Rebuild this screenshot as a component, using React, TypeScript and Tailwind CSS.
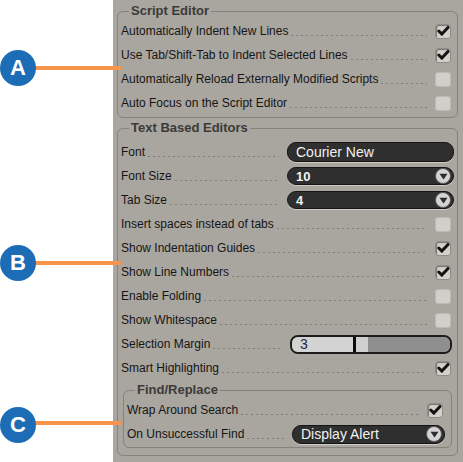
import React from "react";

const FONT = { fontFamily: '"Liberation Sans", Arial, sans-serif' };

function Check() {
  return (
    <svg width="13" height="12" viewBox="0 0 13 12">
      <path d="M1.8 6 L4.9 9.1 L11 2.4" fill="none" stroke="#131313" strokeWidth="3" strokeLinecap="round" strokeLinejoin="round" />
    </svg>
  );
}

function CheckBox({ checked, className = "" }: { checked?: boolean; className?: string }) {
  return (
    <div
      className={
        "w-[16px] h-[15px] rounded-[3px] flex items-center justify-center border " +
        (checked
          ? "bg-[#d3d0cc] border-[#8f8c87] shadow-[inset_1px_1px_1px_#77746f] "
          : "bg-[#d2cfcb] border-[#bdbab5] ") +
        className
      }
    >
      {checked && <Check />}
    </div>
  );
}

function Arrow() {
  return (
    <div className="w-[16px] h-[16px] rounded-full bg-[#d4d4d4] border border-[#5a5a5a] flex items-center justify-center shrink-0">
      <svg width="9" height="7" viewBox="0 0 9 7">
        <path d="M0.5 0.8 L8.5 0.8 L4.5 6.5 Z" fill="#2b2b2b" />
      </svg>
    </div>
  );
}

function Dropdown({ value, width, bold, arrow, className = "" }: { value: string; width: string; bold?: boolean; arrow?: boolean; className?: string }) {
  return (
    <div
      className={
        "flex items-center justify-between rounded-[9px] bg-[#2f2f2f] border border-[#151515] shadow-[0_1px_0_#cfccc7] pl-[8px] pr-[2px] text-[#f2f2f2] text-[14px] leading-none " +
        width +
        " " +
        className
      }
    >
      <span className={bold ? "font-bold text-[13px]" : ""}>{value}</span>
      {arrow && <Arrow />}
    </div>
  );
}

function Slider() {
  return (
    <div className="w-[162px] h-[19px] mr-[2px] rounded-[8px] border-2 border-[#1c1c1c] overflow-hidden flex">
      <div className="w-[61px] bg-[#d3d3d3] text-[14px] leading-[15px] pl-[8px] text-[#1d2a45]">3</div>
      <div className="w-[3px] bg-[#0a0a0a]" />
      <div className="w-[12px] bg-[#cfcfcf]" />
      <div className="flex-1 bg-[#8f8f8f]" />
    </div>
  );
}

function Row({ label, children }: { label: string; children: React.ReactNode }) {
  return (
    <div className="flex items-center h-[24px]">
      <span className="whitespace-nowrap text-[12px] text-[#161616]">{label}</span>
      <div className="flex-1 self-end mb-[7px] ml-[3px] mr-[8px] h-px bg-[linear-gradient(to_right,#7f7c77_50%,transparent_50%)] bg-[length:5px_1px] bg-repeat-x" />
      {children}
    </div>
  );
}

function Legend({ children }: { children: React.ReactNode }) {
  return (
    <legend className="ml-[8px] px-[2px] text-[13px] font-bold leading-[16px] text-[#3b3a37]">{children}</legend>
  );
}

function Callout({ letter, top, lineTop }: { letter: string; top: string; lineTop: string }) {
  return (
    <>
      <div className={"absolute left-[35px] w-[86px] h-[4px] bg-[#f7944b] " + lineTop} />
      <div className={"absolute left-0 w-[36px] h-[36px] rounded-full bg-[#1c6db6] flex items-center justify-center text-white font-bold text-[22px] leading-none " + top}>
        {letter}
      </div>
    </>
  );
}

export default function App() {
  return (
    <div className="relative w-[463px] h-[462px] bg-white overflow-hidden" style={FONT}>
      <div className="ml-[113px] w-[350px] h-[462px] bg-[#a9a59f] pt-[3px] pl-[4px] pr-[5px]">
        <fieldset className="border border-[#86837e] rounded-[6px] pl-[3px] pr-[6px] pb-[2px]">
          <Legend>Script Editor</Legend>
          <Row label="Automatically Indent New Lines"><CheckBox checked /></Row>
          <Row label="Use Tab/Shift-Tab to Indent Selected Lines"><CheckBox checked /></Row>
          <Row label="Automatically Reload Externally Modified Scripts"><CheckBox /></Row>
          <Row label="Auto Focus on the Script Editor"><CheckBox /></Row>
        </fieldset>

        <fieldset className="mt-[2px] border border-[#86837e] rounded-[6px] pl-[3px] pr-[3px] pt-[4px] pb-[7px]">
          <Legend>Text Based Editors</Legend>
          <Row label="Font"><Dropdown value="Courier New" width="w-[167px] h-[20px]" /></Row>
          <Row label="Font Size"><Dropdown value="10" bold arrow width="w-[167px] h-[18px]" /></Row>
          <Row label="Tab Size"><Dropdown value="4" bold arrow width="w-[167px] h-[18px]" /></Row>
          <Row label="Insert spaces instead of tabs"><CheckBox className="mr-[3px]" /></Row>
          <Row label="Show Indentation Guides"><CheckBox checked className="mr-[3px]" /></Row>
          <Row label="Show Line Numbers"><CheckBox checked className="mr-[3px]" /></Row>
          <Row label="Enable Folding"><CheckBox className="mr-[3px]" /></Row>
          <Row label="Show Whitespace"><CheckBox className="mr-[3px]" /></Row>
          <Row label="Selection Margin"><Slider /></Row>
          <Row label="Smart Highlighting"><CheckBox checked className="mr-[3px]" /></Row>

          <fieldset className="mt-[2px] mx-[2px] border border-[#86837e] rounded-[6px] pl-[3px] pr-[6px] pb-[1px]">
            <Legend>Find/Replace</Legend>
            <Row label="Wrap Around Search"><CheckBox checked className="mr-[2px]" /></Row>
            <Row label="On Unsuccessful Find"><Dropdown value="Display Alert" arrow width="w-[153px] h-[19px]" /></Row>
          </fieldset>
        </fieldset>
      </div>

      <Callout letter="A" top="top-[50px]" lineTop="top-[66px]" />
      <Callout letter="B" top="top-[245px]" lineTop="top-[261px]" />
      <Callout letter="C" top="top-[407px]" lineTop="top-[421px]" />
    </div>
  );
}
